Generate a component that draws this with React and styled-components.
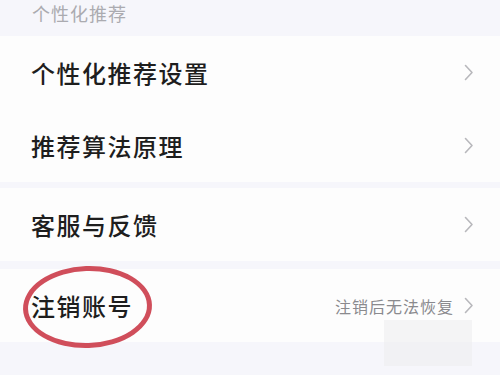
import React from 'react';
import styled, { createGlobalStyle } from 'styled-components';

const GlobalStyle = createGlobalStyle`
    html, body {
        margin: 0;
        padding: 0;
        background: #f6f6fb;
        font-family: "Noto Sans CJK SC", "Noto Sans", sans-serif;
        overflow: hidden;
    }
`

const sections = [
    { gap: 2, rows: [{ title: '个性化推荐设置' }, { title: '推荐算法原理' }] },
    { gap: 6, rows: [{ title: '客服与反馈' }] },
    { gap: 8, rows: [{ title: '注销账号', note: '注销后无法恢复', circled: true }] },
];

const Chevron = () => (
    <svg width="10" height="17" viewBox="0 0 10 17">
        <path d="M1.5 1.5 L8 8.5 L1.5 15.5" fill="none" stroke="#b8b8bc" strokeWidth="1.6" strokeLinecap="round" strokeLinejoin="round" />
    </svg>
);

const App = () => {
    return (
        <Page>
            <GlobalStyle />
            <Header>个性化推荐</Header>
            {sections.map((section, i) => (
                <Card key={i} $gap={section.gap}>
                    {section.rows.map(row => (
                        <Row key={row.title}>
                            <Title>{row.title}</Title>
                            <Right>
                                {row.note && <Note>{row.note}</Note>}
                                <Chevron />
                            </Right>
                            {row.circled && <Circle />}
                        </Row>
                    ))}
                </Card>
            ))}
            <Smudge />
        </Page>
    );
};

export default App;

let Page = styled.div`
    position: relative;
    width: 500px;
    height: 375px;
    background: #f6f6fb;
`

let Header = styled.div`
    height: 34px;
    padding-left: 32px;
    font-size: 18px;
    line-height: 26px;
    color: #ababb0;
    letter-spacing: 1px;
`

let Card = styled.div`
    background: #fdfdfd;
    margin-top: ${p => p.$gap}px;
`

let Row = styled.div`
    position: relative;
    display: flex;
    align-items: center;
    justify-content: space-between;
    height: 73px;
    padding: 0 26px 0 31px;
`

let Title = styled.div`
    font-size: 24px;
    font-weight: 500;
    color: #1e1e1e;
    letter-spacing: 1.5px;
`

let Right = styled.div`
    display: flex;
    align-items: center;
    gap: 10px;
`

let Note = styled.span`
    font-size: 16px;
    color: #8a8a8e;
    letter-spacing: 1px;
`

let Circle = styled.div`
    position: absolute;
    left: 23px;
    top: -3px;
    width: 119px;
    height: 72px;
    border: 5px solid #cc3f4d;
    border-radius: 50%;
    transform: rotate(-2deg);
    opacity: 0.92;
`

let Smudge = styled.div`
    position: absolute;
    left: 384px;
    top: 320px;
    width: 88px;
    height: 46px;
    background: #eeeef0;
    opacity: 0.6;
`
